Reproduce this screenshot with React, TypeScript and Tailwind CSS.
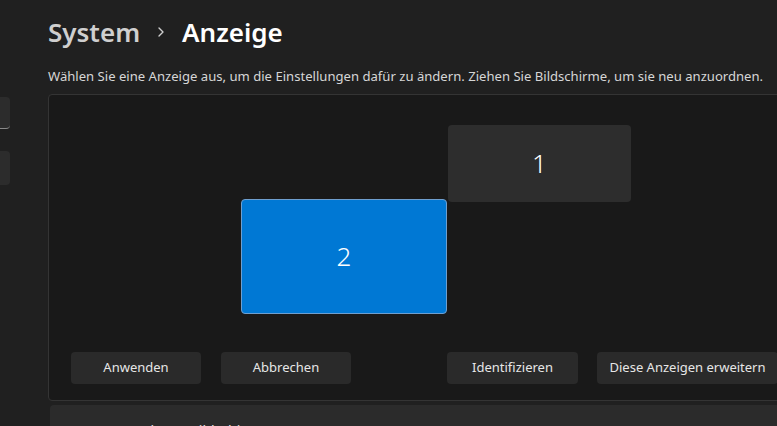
import { ChevronRight } from 'lucide-react';

const font = { fontFamily: '"Segoe UI", "Noto Sans", sans-serif' };

function ActionButton({ text, className = '' }: { text: string; className?: string }) {
  return (
    <button
      className={`h-[32px] rounded-[4px] bg-[#2a2a2a] px-3 text-[13px] text-[#e6e6e6] whitespace-nowrap ${className}`}
    >
      {text}
    </button>
  );
}

function Monitor({ label, active }: { label: string; active?: boolean }) {
  return (
    <div
      className={`w-full h-full rounded-[4px] flex items-center justify-center text-[26px] font-light text-white ${
        active ? 'bg-[#0078d4] border border-[#6f9fcf]' : 'bg-[#2d2d2d]'
      }`}
    >
      {label}
    </div>
  );
}

export default function App() {
  return (
    <div className="w-[777px] h-[426px] overflow-hidden bg-[#202020] flex" style={font}>
      {/* Navigation column, mostly scrolled off to the left */}
      <div className="w-[48px] shrink-0 flex flex-col">
        <div className="mt-[97px] -ml-[190px] w-[200px] h-[32px] shrink-0 rounded-[4px] bg-[#2c2c2c] border-b border-[#8a8a8a]" />
        <div className="mt-[22px] -ml-[190px] w-[200px] h-[34px] shrink-0 rounded-[4px] bg-[#2c2c2c]" />
      </div>

      {/* Content */}
      <div className="w-[800px] shrink-0 flex flex-col">
        {/* Breadcrumb */}
        <div className="mt-[12px] h-[40px] shrink-0 flex items-center text-[26px] font-semibold leading-[40px]">
          <span className="text-[#cfcfcf]">System</span>
          <ChevronRight size={16} strokeWidth={2} className="mx-[13px] text-[#cfcfcf]" />
          <span className="text-white">Anzeige</span>
        </div>

        <p className="mt-[14px] h-[20px] shrink-0 leading-[20px] text-[13.1px] text-[#d6d6d6] whitespace-nowrap">
          Wählen Sie eine Anzeige aus, um die Einstellungen dafür zu ändern. Ziehen Sie Bildschirme, um
          sie neu anzuordnen.
        </p>

        {/* Arrangement panel */}
        <div className="mt-[8px] w-[780px] h-[307px] shrink-0 rounded-[4px] bg-[#191919] border border-[#343434] flex flex-col">
          <div className="relative h-[257px] shrink-0">
            <div className="absolute left-[399px] top-[30px] w-[183px] h-[77px]">
              <Monitor label="1" />
            </div>
            <div className="absolute left-[192px] top-[104px] w-[206px] h-[115px]">
              <Monitor label="2" active />
            </div>
          </div>
          <div className="flex pl-[22px]">
            <ActionButton text="Anwenden" className="w-[130px]" />
            <ActionButton text="Abbrechen" className="w-[130px] ml-[20px]" />
            <ActionButton text="Identifizieren" className="w-[131px] ml-[96px]" />
            <ActionButton text="Diese Anzeigen erweitern" className="w-[181px] ml-[19px]" />
          </div>
        </div>

        {/* Next settings card, cut off by the window */}
        <div className="mt-[4px] ml-[2px] h-[60px] shrink-0 rounded-t-[4px] bg-[#2b2b2b] pl-[80px] pt-[16px] leading-[20px] text-[14px] text-[#e6e6e6]">
          Mehrere Bildschirme
        </div>
      </div>
    </div>
  );
}
